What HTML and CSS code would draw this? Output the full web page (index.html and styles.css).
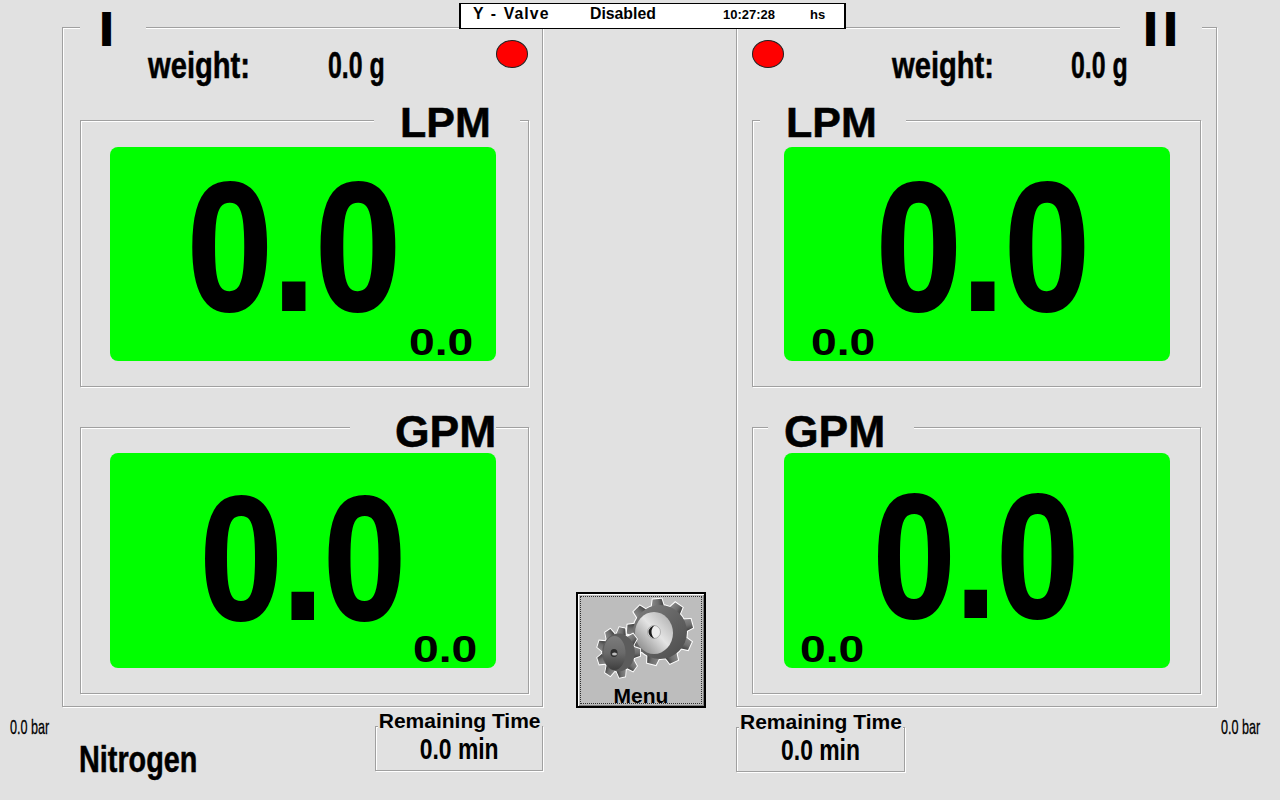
FILE: index.html
```html
<!DOCTYPE html>
<html lang="en">
<head>
<meta charset="utf-8">
<title>Y-Valve Flow Monitor</title>
<link rel="stylesheet" href="styles.css">
</head>
<body>
<main class="screen">
  <header class="status">
    <span class="status-name">Y - Valve</span>
    <span class="status-state">Disabled</span>
    <span class="status-time">10:27:28</span>
    <span class="status-unit">hs</span>
  </header>

  <section class="panel panel-left">
    <div class="panel-legend legend-i">I</div>
    <div class="weight-row weight-left">
      <span class="weight-label">weight:</span>
      <span class="weight-value">0.0 g</span>
      <span class="lamp lamp-end"></span>
    </div>
    <div class="groups groups-left">
      <div class="group">
        <div class="legend legend-lpm-l">LPM</div>
        <div class="display">
          <span class="big big-a">0.0</span>
          <span class="small small-a">0.0</span>
        </div>
      </div>
      <div class="group group-low">
        <div class="legend legend-gpm-l">GPM</div>
        <div class="display display-low">
          <span class="big big-b">0.0</span>
          <span class="small small-b">0.0</span>
        </div>
      </div>
    </div>
  </section>

  <div class="center">
    <button class="menu" type="button">
      <span class="menu-inner">
        <svg class="gears" viewBox="590 595 110 90" width="110" height="90" aria-hidden="true">
          <defs>
            <linearGradient id="faceBig" x1="0.9" y1="0.1" x2="0.1" y2="0.9">
              <stop offset="0" stop-color="#b4b4b4"/>
              <stop offset="0.45" stop-color="#e4e4e4"/>
              <stop offset="1" stop-color="#8a8a8a"/>
            </linearGradient>
            <linearGradient id="faceSmall" x1="0.5" y1="0" x2="0.5" y2="1">
              <stop offset="0" stop-color="#7c7c7c"/>
              <stop offset="0.5" stop-color="#6a6a6a"/>
              <stop offset="1" stop-color="#3e3e3e"/>
            </linearGradient>
            <linearGradient id="tooth" x1="0" y1="0" x2="1" y2="0">
              <stop offset="0" stop-color="#8a8a8a"/>
              <stop offset="0.55" stop-color="#6e6e6e"/>
              <stop offset="1" stop-color="#3c3c3c"/>
            </linearGradient>
            <linearGradient id="body" x1="0" y1="0" x2="1" y2="1">
              <stop offset="0" stop-color="#7e7e7e"/>
              <stop offset="1" stop-color="#4a4a4a"/>
            </linearGradient>
            <path id="tb" d="M-6.500 -24 L-4.500 -33 L4.500 -33 L6.500 -24Z"/>
            <path id="ts" d="M-5.500 -18 L-3.500 -25 L3.500 -25 L5.500 -18Z"/>
            <g id="gearBig">
              <use href="#tb" transform="rotate(-5)"/>
              <use href="#tb" transform="rotate(35)"/>
              <use href="#tb" transform="rotate(75)"/>
              <use href="#tb" transform="rotate(115)"/>
              <use href="#tb" transform="rotate(155)"/>
              <use href="#tb" transform="rotate(195)"/>
              <use href="#tb" transform="rotate(235)"/>
              <use href="#tb" transform="rotate(275)"/>
              <use href="#tb" transform="rotate(315)"/>
            </g>
            <g id="gearSmall">
              <use href="#ts" transform="rotate(10)"/>
              <use href="#ts" transform="rotate(50)"/>
              <use href="#ts" transform="rotate(90)"/>
              <use href="#ts" transform="rotate(130)"/>
              <use href="#ts" transform="rotate(170)"/>
              <use href="#ts" transform="rotate(210)"/>
              <use href="#ts" transform="rotate(250)"/>
              <use href="#ts" transform="rotate(290)"/>
              <use href="#ts" transform="rotate(330)"/>
            </g>
          </defs>
          <g transform="translate(660 632)">
            <use href="#gearBig" fill="#fff" stroke="#fff" stroke-width="2"/>
            <circle r="28" fill="#fff"/>
            <use href="#gearBig" fill="url(#tooth)"/>
            <circle r="27" fill="url(#body)"/>
          </g>
          <ellipse cx="654" cy="633" rx="19" ry="21" fill="url(#faceBig)"/>
          <ellipse cx="654" cy="632" rx="6.500" ry="6.500" fill="#ededed" stroke="#9a9a9a" stroke-width="0.700"/>
          <path d="M655.500 625.500 A7 6.500 0 0 0 655.500 638.500 A4 6.500 0 0 1 655.500 625.500Z" fill="#1a1a1a"/>
          <g transform="translate(618.500 652.500) scale(0.86 1)">
            <use href="#gearSmall" fill="#fff" stroke="#fff" stroke-width="2"/>
            <circle r="20" fill="#fff"/>
            <use href="#gearSmall" fill="url(#tooth)"/>
            <circle r="19" fill="#5c5c5c"/>
          </g>
          <ellipse cx="614.500" cy="653" rx="11" ry="17" fill="url(#faceSmall)"/>
          <ellipse cx="614" cy="653" rx="3.500" ry="4" fill="#2e2e2e"/>
          <ellipse cx="614.500" cy="654" rx="2.500" ry="1.500" fill="#bdbdbd"/>
        </svg>
        <span class="menu-label">Menu</span>
      </span>
    </button>
  </div>

  <section class="panel panel-right">
    <div class="panel-legend legend-ii">II</div>
    <div class="weight-row weight-right">
      <span class="lamp"></span>
      <span class="weight-label">weight:</span>
      <span class="weight-value">0.0 g</span>
    </div>
    <div class="groups groups-right">
      <div class="group">
        <div class="legend legend-lpm-r">LPM</div>
        <div class="display">
          <span class="big big-c">0.0</span>
          <span class="small small-c">0.0</span>
        </div>
      </div>
      <div class="group group-low">
        <div class="legend legend-gpm-r">GPM</div>
        <div class="display display-low">
          <span class="big big-d">0.0</span>
          <span class="small small-d">0.0</span>
        </div>
      </div>
    </div>
  </section>

  <footer class="foot foot-left">
    <span class="bar">0.0 bar</span>
    <span class="gas">Nitrogen</span>
    <div class="timer timer-left">
      <div class="timer-title">Remaining Time</div>
      <div class="timer-value">0.0 min</div>
    </div>
  </footer>

  <footer class="foot foot-right">
    <div class="timer timer-right">
      <div class="timer-title">Remaining Time</div>
      <div class="timer-value">0.0 min</div>
    </div>
    <span class="bar bar-right">0.0 bar</span>
  </footer>
</main>
</body>
</html>
```
FILE: styles.css
```css
* { box-sizing: border-box; }
html, body { margin: 0; padding: 0; }
body {
  background: #e1e1e1;
  font-family: "Liberation Sans", Arial, sans-serif;
  color: #000;
  overflow: hidden;
}
.screen {
  position: relative;
  width: 1280px;
  height: 800px;
  display: grid;
  grid-template-columns: 62px 481px 193px 481px 63px;
  grid-template-rows: 27px 680px 93px;
}

/* status bar */
.status {
  position: absolute;
  z-index: 2;
  left: 459px;
  top: 3px;
  width: 387px;
  height: 26px;
  background: #fff;
  border: 1px solid #000;
  border-left-width: 2px;
  border-right-width: 2px;
  font-weight: bold;
  display: flex;
  align-items: baseline;
  line-height: 19px;
}
.status-name { font-size: 15.800px; margin-left: 12px; width: 117px; letter-spacing: 1.100px; word-spacing: 1px; }
.status-state { font-size: 15.800px; width: 133px; }
.status-time { font-size: 13px; width: 87px; }
.status-unit { font-size: 13px; }

/* etched frames */
.panel, .group, .timer {
  border: 1px solid #a0a0a0;
  box-shadow: inset 1px 1px 0 #fff, 1px 1px 0 #fff;
}
.panel {
  grid-row: 2;
  position: relative;
  display: flex;
  flex-direction: column;
}
.panel-left { grid-column: 2; }
.panel-right { grid-column: 4; }

.panel-legend {
  position: absolute;
  top: -24px;
  height: 50px;
  background: #e1e1e1;
  font-size: 47px;
  font-weight: bold;
  line-height: 50px;
  -webkit-text-stroke: 2px #000;
}
.legend-i { left: 17px; width: 66px; padding-left: 20px; }
.legend-ii { left: 383px; width: 82px; padding-left: 24px; letter-spacing: 7px; }

/* weight row */
.weight-row {
  height: 92px;
  display: flex;
  align-items: flex-start;
}
.weight-left { padding: 12px 14px 0 85px; }
.weight-right { padding: 12px 0 0 15px; }
.weight-label, .weight-value {
  display: inline-block;
  font-weight: bold;
  font-size: 36px;
  line-height: 50px;
  margin-top: 1px;
  transform-origin: left top;
  white-space: nowrap;
  -webkit-text-stroke: .5px #000;
}
.weight-label { width: 179px; transform: scaleX(.81); }
.weight-left .weight-label { width: 180px; }
.weight-value { width: 60px; transform: scaleX(.69); }
.weight-right .weight-label { margin-left: 108px; }
.lamp {
  width: 32px;
  height: 28px;
  border-radius: 50%;
  background: #ff0000;
  border: 1px solid #202020;
  flex: none;
}
.lamp-end { margin-left: auto; }

/* flow groups */
.groups { display: flex; flex-direction: column; gap: 40px; }
.groups-left { margin: 0 13px 0 17px; }
.groups-right { margin: 0 15px; }
.group {
  position: relative;
  height: 267px;
  padding: 26px 32px 0 29px;
}
.groups-right .group { padding: 26px 30px 0 31px; }
.groups .group-low { padding-top: 25px; }
.legend {
  position: absolute;
  top: -21px;
  height: 44px;
  width: 146px;
  background: #e1e1e1;
  font-size: 43px;
  font-weight: bold;
  line-height: 44px;
  white-space: nowrap;
  -webkit-text-stroke: .5px #000;
}
.legend-lpm-l { left: 293px; padding-left: 26px; }
.legend-gpm-l { left: 269px; padding-left: 45px; top: -18px; font-size: 44.500px; }
.legend-lpm-r { left: 7px; padding-left: 26px; }
.legend-gpm-r { left: 15px; padding-left: 16px; top: -18px; font-size: 44.500px; }

.display {
  position: relative;
  height: 214px;
  background: #00ff00;
  border-radius: 8px;
}
.display-low { height: 215px; }
.big {
  position: absolute;
  font-weight: bold;
  white-space: nowrap;
  line-height: .76;
  transform: scaleX(.836);
  transform-origin: left top;
  -webkit-text-stroke: 2px #000;
}
.big-a { left: 77px; top: 30px; font-size: 184px; }
.big-b { left: 90px; top: 38px; font-size: 177px; }
.big-c { left: 92px; top: 30px; font-size: 184px; }
.big-d { left: 89px; top: 36px; font-size: 177px; }
.small {
  position: absolute;
  font-size: 37px;
  font-weight: bold;
  line-height: 1;
  transform: scaleX(1.25);
  transform-origin: left top;
}
.small-a { left: 299px; top: 177px; }
.small-b { left: 303px; top: 178px; }
.small-c { left: 27px; top: 177px; }
.small-d { left: 16px; top: 178px; }

/* centre */
.center {
  grid-column: 3;
  grid-row: 2 / 4;
  padding: 565px 0 0 33px;
}
.menu {
  display: block;
  width: 130px;
  height: 116px;
  padding: 2px;
  border: 2px solid #000;
  background: #bdbdbd;
  box-shadow: inset 1px 1px 0 #fff, inset -1px -1px 0 #808080;
  font-family: inherit;
}
.menu-inner {
  display: flex;
  flex-direction: column;
  align-items: flex-start;
  height: 100%;
  border: 1px dotted #303030;
  position: relative;
}
.gears { display: block; margin: -2px 0 0 9px; flex: none; }
.menu-label {
  align-self: center;
  font-size: 21px;
  font-weight: bold;
  line-height: 22px;
  margin-top: 0;
  z-index: 1;
}

/* footers */
.foot { grid-row: 3; display: flex; align-items: flex-start; }
.foot-left { grid-column: 1 / 3; }
.foot-right { grid-column: 4 / 6; }
.bar {
  font-size: 21px;
  line-height: 24px;
  white-space: nowrap;
  display: inline-block;
  transform: scaleX(.6);
  transform-origin: left top;
  margin: 8px 0 0 10px;
  width: 40px;
  -webkit-text-stroke: .3px #000;
}
.bar-right { margin: 8px 0 0 316px; }
.gas {
  font-size: 36px;
  font-weight: bold;
  line-height: 40px;
  margin: 33px 0 0 29px;
  width: 297px;
  transform: scaleX(.8);
  transform-origin: left top;
  -webkit-text-stroke: .5px #000;
}
.timer {
  position: relative;
  width: 169px;
  height: 45px;
  margin-top: 19px;
}
.timer-right { margin-top: 20px; }
.timer-title {
  position: absolute;
  left: 2px;
  top: -17px;
  padding: 0 1px;
  background: #e1e1e1;
  font-size: 21px;
  font-weight: bold;
  line-height: 22px;
  white-space: nowrap;
  height: 21px;
}
.timer-value {
  font-size: 29px;
  font-weight: bold;
  line-height: 32px;
  text-align: center;
  margin-top: 6px;
  transform: scaleX(.79);
}
```
